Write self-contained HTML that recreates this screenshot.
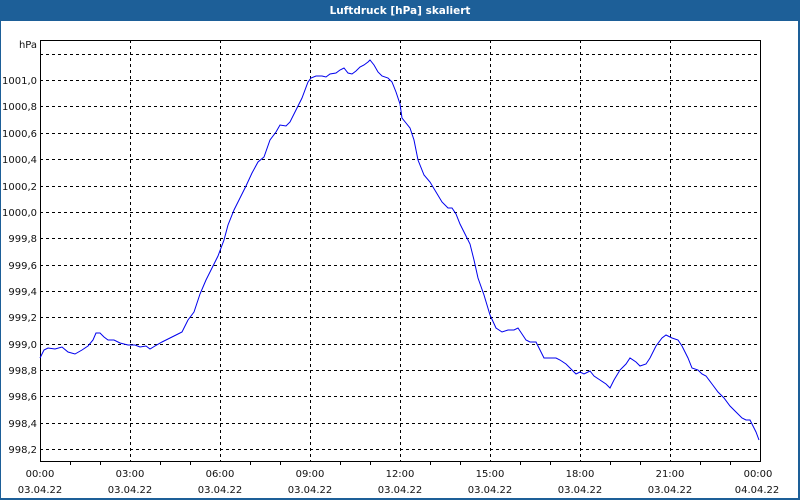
<!DOCTYPE html>
<html><head><meta charset="utf-8"><style>
html,body{margin:0;padding:0;background:#fff}
body{width:800px;height:500px;overflow:hidden;position:relative;font-family:"DejaVu Sans","Liberation Sans",sans-serif}
</style></head><body>
<svg width="800" height="500" xmlns="http://www.w3.org/2000/svg" style="position:absolute;left:0;top:0">
<rect x="0" y="0" width="800" height="500" fill="#1d5f98"/>
<rect x="1" y="21" width="797" height="477" fill="#fff"/>
<text x="400" y="14" fill="#fff" font-size="10.5" font-weight="bold" text-anchor="middle" font-family="DejaVu Sans, sans-serif">Luftdruck [hPa] skaliert</text>
<g stroke="#000" stroke-width="1" stroke-dasharray="3,3" shape-rendering="crispEdges">
<line x1="40" x2="760" y1="54.5" y2="54.5"/><line x1="40" x2="760" y1="80.5" y2="80.5"/><line x1="40" x2="760" y1="106.5" y2="106.5"/><line x1="40" x2="760" y1="133.5" y2="133.5"/><line x1="40" x2="760" y1="159.5" y2="159.5"/><line x1="40" x2="760" y1="186.5" y2="186.5"/><line x1="40" x2="760" y1="212.5" y2="212.5"/><line x1="40" x2="760" y1="238.5" y2="238.5"/><line x1="40" x2="760" y1="265.5" y2="265.5"/><line x1="40" x2="760" y1="291.5" y2="291.5"/><line x1="40" x2="760" y1="317.5" y2="317.5"/><line x1="40" x2="760" y1="344.5" y2="344.5"/><line x1="40" x2="760" y1="370.5" y2="370.5"/><line x1="40" x2="760" y1="396.5" y2="396.5"/><line x1="40" x2="760" y1="423.5" y2="423.5"/><line x1="40" x2="760" y1="449.5" y2="449.5"/>
<line x1="130.5" x2="130.5" y1="40" y2="461"/><line x1="220.5" x2="220.5" y1="40" y2="461"/><line x1="310.5" x2="310.5" y1="40" y2="461"/><line x1="400.5" x2="400.5" y1="40" y2="461"/><line x1="490.5" x2="490.5" y1="40" y2="461"/><line x1="580.5" x2="580.5" y1="40" y2="461"/><line x1="670.5" x2="670.5" y1="40" y2="461"/>
</g>
<rect x="40.5" y="40.5" width="720" height="421" fill="none" stroke="#000" stroke-width="1" shape-rendering="crispEdges"/>
<g stroke="#000" shape-rendering="crispEdges">
<line x1="70.5" x2="70.5" y1="461" y2="465"/><line x1="100.5" x2="100.5" y1="461" y2="465"/><line x1="160.5" x2="160.5" y1="461" y2="465"/><line x1="190.5" x2="190.5" y1="461" y2="465"/><line x1="250.5" x2="250.5" y1="461" y2="465"/><line x1="280.5" x2="280.5" y1="461" y2="465"/><line x1="340.5" x2="340.5" y1="461" y2="465"/><line x1="370.5" x2="370.5" y1="461" y2="465"/><line x1="430.5" x2="430.5" y1="461" y2="465"/><line x1="460.5" x2="460.5" y1="461" y2="465"/><line x1="520.5" x2="520.5" y1="461" y2="465"/><line x1="550.5" x2="550.5" y1="461" y2="465"/><line x1="610.5" x2="610.5" y1="461" y2="465"/><line x1="640.5" x2="640.5" y1="461" y2="465"/><line x1="700.5" x2="700.5" y1="461" y2="465"/><line x1="730.5" x2="730.5" y1="461" y2="465"/>
</g>
<polyline fill="none" stroke="#0000ee" stroke-width="1" points="40,358 44,350 48,348 55,349 62,347 68,352 75,354 82,350 88,346 93,340 96,333 100,333 104,337 108,340 114,340 120,343 128,345 135,345 140,347 146,346 150,349 155,346 162,342 170,338 178,334 182,332 188,320 194,312 200,294 206,280 212,268 218,256 224,240 228,225 234,210 240,198 246,186 252,173 258,162 264,157 270,140 276,132 280,125 286,126 290,122 296,110 302,98 308,82 311,78 316,76 322,76 326,77 330,74 336,73 340,70 344,68 348,73 352,74 356,71 360,67 364,65 368,62 370,60 374,65 378,72 382,76 388,78 392,82 396,92 400,104 402,118 406,123 410,128 414,140 418,160 424,175 430,182 436,192 442,202 448,208 452,208 456,214 460,224 466,236 470,244 474,260 478,278 484,295 490,315 496,328 502,332 508,330 514,330 518,328 522,334 526,340 530,342 536,342 540,350 544,358 550,358 556,358 560,360 566,364 570,368 576,374 580,372 584,374 590,371 594,376 600,380 606,384 610,388 614,380 620,370 626,364 630,358 636,362 640,366 646,364 650,358 656,346 662,338 666,335 672,338 678,340 682,346 688,358 692,368 698,370 702,374 706,376 712,384 718,392 724,398 730,406 736,412 742,418 746,420 750,420 752,424 756,432 759,440"/>
<g font-size="10" fill="#111" text-anchor="end" font-family="DejaVu Sans, sans-serif">
<text x="37" y="48">hPa</text>
<text x="37" y="84">1001,0</text><text x="37" y="110">1000,8</text><text x="37" y="137">1000,6</text><text x="37" y="163">1000,4</text><text x="37" y="190">1000,2</text><text x="37" y="216">1000,0</text><text x="37" y="242">999,8</text><text x="37" y="269">999,6</text><text x="37" y="295">999,4</text><text x="37" y="321">999,2</text><text x="37" y="348">999,0</text><text x="37" y="374">998,8</text><text x="37" y="400">998,6</text><text x="37" y="427">998,4</text><text x="37" y="453">998,2</text>
</g>
<g font-size="10" fill="#111" text-anchor="middle" font-family="DejaVu Sans, sans-serif">
<text x="40" y="477">00:00</text><text x="40" y="493">03.04.22</text>
<text x="130" y="477">03:00</text><text x="130" y="493">03.04.22</text>
<text x="220" y="477">06:00</text><text x="220" y="493">03.04.22</text>
<text x="310" y="477">09:00</text><text x="310" y="493">03.04.22</text>
<text x="400" y="477">12:00</text><text x="400" y="493">03.04.22</text>
<text x="490" y="477">15:00</text><text x="490" y="493">03.04.22</text>
<text x="580" y="477">18:00</text><text x="580" y="493">03.04.22</text>
<text x="670" y="477">21:00</text><text x="670" y="493">03.04.22</text>
<text x="758" y="477">00:00</text><text x="757" y="493">04.04.22</text>
</g>
</svg>
</body></html>
